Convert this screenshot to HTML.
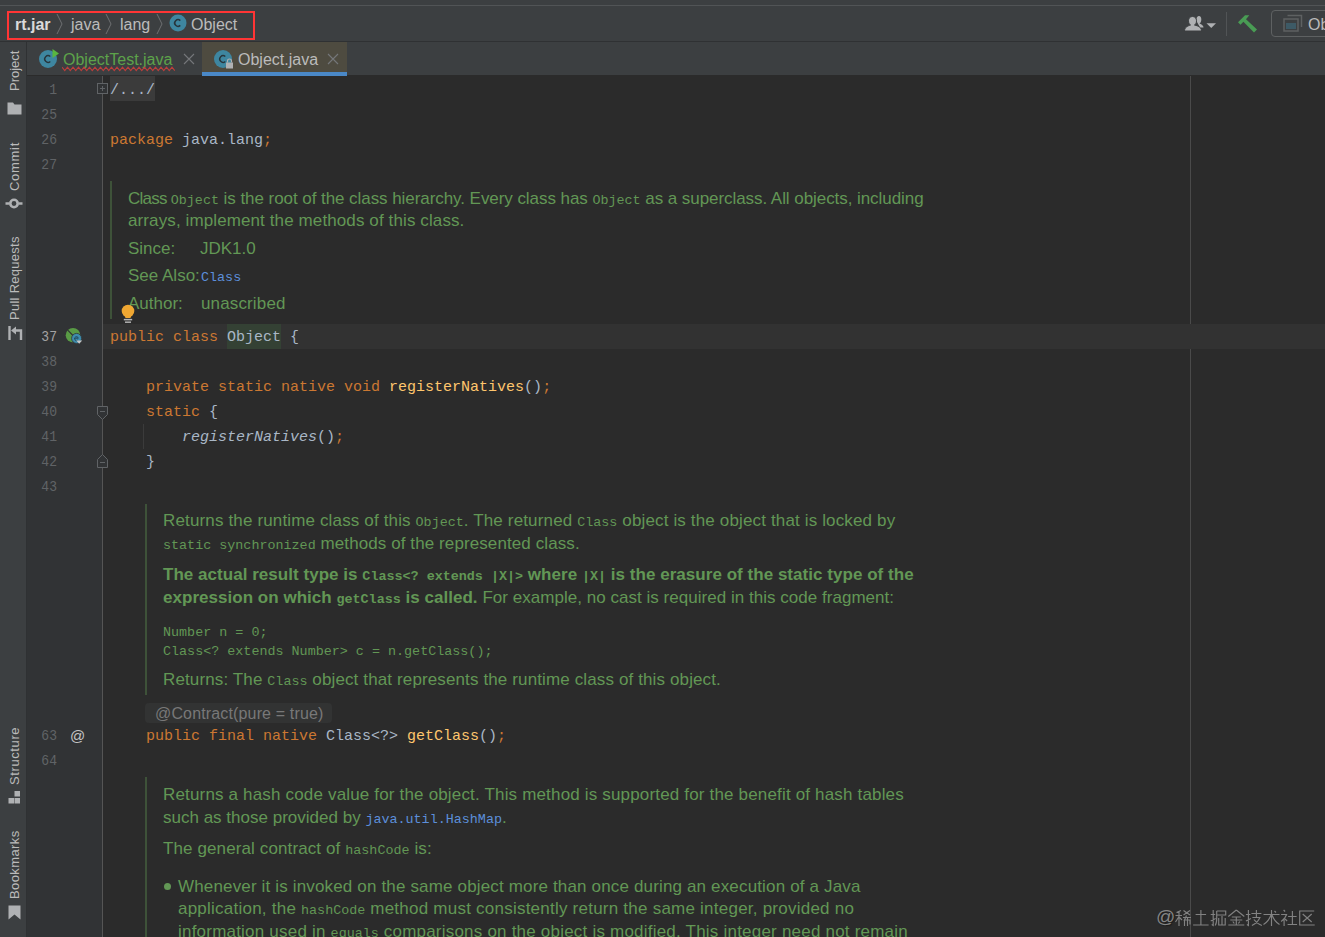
<!DOCTYPE html>
<html><head><meta charset="utf-8">
<style>
*{margin:0;padding:0;box-sizing:border-box}
html,body{width:1325px;height:937px;overflow:hidden;background:#2B2B2B}
body{position:relative;font-family:"Liberation Sans",sans-serif}
.a{position:absolute}
#top{left:0;top:0;width:1325px;height:42px;background:#3C3F41}
#top .ln5{left:0;top:5px;width:1325px;height:1px;background:#515456}
#top .bot{left:0;top:41px;width:1325px;height:1px;background:#2F3133}
#redbox{left:7px;top:11px;width:248px;height:29px;border:2px solid #FF3535}
.crumb{font-size:16px;color:#BBBBBB;white-space:pre;line-height:20px}
#side{left:0;top:42px;width:26px;height:895px;background:#3C3F41}
#sideb{left:26px;top:42px;width:1px;height:895px;background:#2F3133}
.vt{font-size:13px;color:#BBBBBB;white-space:pre;transform-origin:0 0;transform:rotate(-90deg);line-height:14px}
#tabs{left:27px;top:42px;width:1298px;height:33px;background:#3C3F41}
#seltab{left:202px;top:42px;width:145px;height:30px;background:#4E4B40}
#selline{left:202px;top:72px;width:145px;height:4px;background:#4A88C7}
.tabt{font-size:16px;white-space:pre;line-height:20px}
#gutter{left:27px;top:76px;width:75px;height:861px;background:#313335}
#gline{left:102px;top:76px;width:1px;height:861px;background:#555555}
#margin{left:1190px;top:76px;width:1px;height:861px;background:#4A4A4A}
.row{position:absolute;left:103px;width:1222px;height:25px}
.num{position:absolute;left:26px;width:31px;transform:scaleX(.9);transform-origin:100% 50%;text-align:right;font-family:"Liberation Mono",monospace;font-size:14.5px;color:#606366;line-height:25px;padding-top:1px}
.code{position:absolute;left:110px;font-family:"Liberation Mono",monospace;font-size:15px;color:#A9B7C6;white-space:pre;line-height:25px;padding-top:2px}
.k{color:#CC7832}.m{color:#FFC66D}.i{font-style:italic}
.doc{position:absolute;font-size:17px;color:#629755;white-space:pre;line-height:20px}
.doc code{font-family:"Liberation Mono",monospace;font-size:13.4px;letter-spacing:0}
.doc b{font-weight:bold}
.lnk{color:#5C8FDA}
.bar{position:absolute;width:2px;background:#3E5239}
</style></head><body>

<!-- top toolbar -->
<div id="top" class="a">
  <div class="a ln5"></div>
  <div class="a bot"></div>
</div>
<div id="redbox" class="a"></div>
<div class="a crumb" style="left:15px;top:15px;color:#DADADA;font-weight:bold">rt.jar</div>
<svg class="a" style="left:55px;top:13px" width="10" height="22"><path d="M2 1 L7 11 L2 21" stroke="#6E7072" stroke-width="1" fill="none"/></svg>
<div class="a crumb" style="left:71px;top:15px">java</div>
<svg class="a" style="left:104px;top:13px" width="10" height="22"><path d="M2 1 L7 11 L2 21" stroke="#6E7072" stroke-width="1" fill="none"/></svg>
<div class="a crumb" style="left:120px;top:15px">lang</div>
<svg class="a" style="left:155px;top:13px" width="10" height="22"><path d="M2 1 L7 11 L2 21" stroke="#6E7072" stroke-width="1" fill="none"/></svg>
<svg class="a" style="left:169px;top:14px" width="18" height="18"><circle cx="9" cy="9" r="8.5" fill="#3E86A0"/><path d="M11.3 6.6 A3.3 3.3 0 1 0 11.3 11.4" stroke="#27353C" stroke-width="1.6" fill="none"/></svg>
<div class="a crumb" style="left:191px;top:15px">Object</div>

<!-- toolbar right -->

<svg class="a" style="left:1183px;top:14px" width="36" height="20">
  <path d="M13.2 6.5 C13.2 3.5 14.5 2 16 2 C17.5 2 18.3 3.5 18.3 5.5 C18.3 7.5 17.5 9 16.5 9.5 C18.8 10.5 20.5 11.5 20.5 13.5 L17 13.5 Z" fill="#AFB1B3"/>
  <path d="M9.5 2.5 C12 2.5 13.5 4.2 13.5 6.8 C13.5 9 12.5 10.5 11.5 11 C15.5 12 18.5 13.5 18.5 17 L1.5 17 C1.5 13.5 4.5 12 7.5 11 C6.5 10.5 5.5 9 5.5 6.8 C5.5 4.2 7 2.5 9.5 2.5 Z" fill="#AFB1B3" stroke="#3C3F41" stroke-width="1"/>
  <path d="M23.5 9.2 H33 L28.25 14 Z" fill="#AFB1B3"/>
</svg>
<svg class="a" style="left:1232px;top:10px" width="30" height="28"><path d="M6 12.3 L13 5.2 L17.3 5.3 L14 9.2 L25 19.6 L22 22.4 L11.4 11.8 L8.5 14.8 Z" fill="#499C54"/></svg>
<svg class="a" style="left:1282px;top:14px" width="22" height="19"><path d="M5.5 1.5 H19.5 V13" stroke="#5E6162" stroke-width="1.5" fill="none"/><rect x="2" y="5" width="14" height="12" fill="#3C3F41" stroke="#5E6162" stroke-width="1.5"/><rect x="4" y="9" width="10" height="6" fill="#3D5A66"/></svg>

<div class="a" style="left:1226px;top:12px;width:1px;height:24px;background:#515456"></div>
<div class="a" style="left:1271px;top:10px;width:60px;height:27px;border:1px solid #5E6162;border-radius:4px"></div>
<div class="a crumb" style="left:1308px;top:15px">Ob</div>

<!-- left side strip -->
<div id="side" class="a"></div>
<div id="sideb" class="a"></div>
<div class="a vt" style="left:8px;top:91px">Project</div>
<svg class="a" style="left:7px;top:101px" width="15" height="14"><path d="M0.5 1.5 H6 L7.5 3.5 H14.5 V13.5 H0.5 Z" fill="#AFB1B3"/></svg>
<div class="a vt" style="left:8px;top:191px;letter-spacing:0.7px">Commit</div>
<svg class="a" style="left:5px;top:197px" width="18" height="13"><circle cx="9" cy="6.5" r="3.7" stroke="#AFB1B3" stroke-width="2.6" fill="none"/><path d="M0.5 6.5 H4.5 M13.5 6.5 H17.5" stroke="#AFB1B3" stroke-width="2.4"/></svg>
<div class="a vt" style="left:8px;top:320px;letter-spacing:0.27px">Pull Requests</div>
<svg class="a" style="left:8px;top:325px" width="15" height="16"><path d="M1.5 1 V15" stroke="#AFB1B3" stroke-width="2.4"/><path d="M3 5.5 L8 1.5 V9.5 Z" fill="#AFB1B3"/><path d="M7 5.5 H13 V15" stroke="#AFB1B3" stroke-width="2.4" fill="none"/></svg>
<div class="a vt" style="left:8px;top:785px;letter-spacing:0.6px">Structure</div>
<svg class="a" style="left:8px;top:790px" width="14" height="15"><rect x="6.5" y="1" width="5.5" height="5.5" fill="#AFB1B3"/><rect x="0.5" y="8" width="5.5" height="5.5" fill="#AFB1B3"/><rect x="6.5" y="8" width="5.5" height="5.5" fill="#AFB1B3"/></svg>
<div class="a vt" style="left:8px;top:899px;letter-spacing:0.4px">Bookmarks</div>
<svg class="a" style="left:8px;top:905px" width="14" height="16"><path d="M0.5 0.5 H12.5 V14.5 L6.5 9.5 L0.5 14.5 Z" fill="#AFB1B3"/></svg>


<!-- tabs -->
<div id="tabs" class="a"></div>
<div id="seltab" class="a"></div>
<div id="selline" class="a"></div>
<div class="a tabt" style="left:63px;top:50px;color:#5DA34A">ObjectTest.java</div>
<div class="a tabt" style="left:238px;top:50px;color:#BBBBBB">Object.java</div>
<svg class="a" style="left:38px;top:48px" width="22" height="22"><circle cx="10" cy="11" r="9" fill="#3E86A0"/><path d="M12.3 8.6 A3.3 3.3 0 1 0 12.3 13.4" stroke="#27353C" stroke-width="1.4" fill="none"/><path d="M14.5 1 L21 5.5 L14.5 10 Z" fill="#59B63F"/></svg>
<svg class="a" style="left:62px;top:66px" width="116" height="6"><path d="M0.00 1.2 L2.75 4.6 L5.50 1.2 L8.25 4.6 L11.00 1.2 L13.75 4.6 L16.50 1.2 L19.25 4.6 L22.00 1.2 L24.75 4.6 L27.50 1.2 L30.25 4.6 L33.00 1.2 L35.75 4.6 L38.50 1.2 L41.25 4.6 L44.00 1.2 L46.75 4.6 L49.50 1.2 L52.25 4.6 L55.00 1.2 L57.75 4.6 L60.50 1.2 L63.25 4.6 L66.00 1.2 L68.75 4.6 L71.50 1.2 L74.25 4.6 L77.00 1.2 L79.75 4.6 L82.50 1.2 L85.25 4.6 L88.00 1.2 L90.75 4.6 L93.50 1.2 L96.25 4.6 L99.00 1.2 L101.75 4.6 L104.50 1.2 L107.25 4.6 L110.00 1.2 L112.75 4.6" stroke="#BC3F3C" stroke-width="1.1" fill="none"/></svg>
<svg class="a" style="left:183px;top:53px" width="12" height="12"><path d="M1 1 L11 11 M11 1 L1 11" stroke="#75777A" stroke-width="1.1"/></svg>
<svg class="a" style="left:213px;top:49px" width="22" height="22"><circle cx="10" cy="10" r="9" fill="#3E86A0"/><path d="M12.3 7.6 A3.3 3.3 0 1 0 12.3 12.4" stroke="#27353C" stroke-width="1.4" fill="none"/><rect x="13" y="13.5" width="7" height="6" fill="#AFB1B3"/><path d="M14.5 13.5 V12 A2 2 0 0 1 18.5 12 V13.5" stroke="#AFB1B3" stroke-width="1.2" fill="none"/></svg>
<svg class="a" style="left:327px;top:53px" width="12" height="12"><path d="M1 1 L11 11 M11 1 L1 11" stroke="#75777A" stroke-width="1.1"/></svg>


<!-- gutter -->
<div id="gutter" class="a"></div>
<div id="gline" class="a"></div>
<div id="margin" class="a"></div>

<!-- current line -->
<div class="row" style="top:324px;background:#323232"></div>
<div class="a" style="left:227px;top:324px;width:54px;height:25px;background:#344134"></div>
<div class="a" style="left:110px;top:76px;width:45px;height:25px;background:#3B3B3B"></div>

<div class="num" style="padding-top:2px;top:76px">1</div>
<div class="num" style="padding-top:2px;top:101px">25</div>
<div class="num" style="padding-top:2px;top:126px">26</div>
<div class="num" style="padding-top:2px;top:151px">27</div>
<div class="num" style="top:324px;color:#A4A3A3">37</div>
<div class="num" style="top:349px">38</div>
<div class="num" style="top:374px">39</div>
<div class="num" style="top:399px">40</div>
<div class="num" style="top:424px">41</div>
<div class="num" style="top:449px">42</div>
<div class="num" style="top:474px">43</div>
<div class="num" style="padding-top:1px;top:723px">63</div>
<div class="num" style="padding-top:1px;top:748px">64</div>

<div class="code" style="top:76px">/.../</div>
<svg class="a" style="left:96px;top:82px" width="13" height="13"><rect x="1.5" y="1.5" width="10" height="10" fill="#313335" stroke="#606366"/><path d="M4 6.5 H9 M6.5 4 V9" stroke="#606366"/></svg>
<svg class="a" style="left:96px;top:405px" width="13" height="16"><path d="M1.5 1.5 H11.5 V9.5 L6.5 14.5 L1.5 9.5 Z" fill="#313335" stroke="#606366"/><path d="M4 6.5 H9" stroke="#606366"/></svg>
<svg class="a" style="left:96px;top:453px" width="13" height="16"><path d="M1.5 14.5 H11.5 V6.5 L6.5 1.5 L1.5 6.5 Z" fill="#313335" stroke="#606366"/><path d="M4 9.5 H9" stroke="#606366"/></svg>
<div class="a" style="left:143px;top:424px;width:1px;height:25px;background:#3B3B3B"></div>
<svg class="a" style="left:65px;top:327px" width="20" height="20"><circle cx="8" cy="8.2" r="7.3" fill="#599B45"/><path d="M2.5 2.8 L8 8.5 L8.3 16" stroke="#313335" stroke-width="1.2" fill="none"/><circle cx="11.6" cy="11.4" r="5" fill="#3D8DAE" stroke="#313335" stroke-width="0.8"/><path d="M9.6 11.2 H13.3 A1.9 1.9 0 1 0 12.8 13" stroke="#24485A" stroke-width="1" fill="none"/><path d="M11.2 13.4 L17.2 13.4 L14.2 16.8 Z" fill="#C6C6C6"/></svg>
<div class="a" style="left:70px;top:726px;font-size:15px;color:#C4C4C4;line-height:20px">@</div>


<div class="code" style="top:126px"><span class="k">package</span> java.lang<span class="k">;</span></div>
<div class="code" style="top:324px;padding-top:1px"><span class="k">public class</span> Object {</div>
<div class="code" style="top:374px;padding-top:1px">    <span class="k">private static native void</span> <span class="m">registerNatives</span>()<span class="k">;</span></div>
<div class="code" style="top:399px;padding-top:1px">    <span class="k">static</span> {</div>
<div class="code" style="top:424px;padding-top:1px">        <span class="i">registerNatives</span>()<span class="k">;</span></div>
<div class="code" style="top:449px;padding-top:1px">    }</div>
<div class="code" style="top:723px;padding-top:1px">    <span class="k">public final native</span> Class&lt;?&gt; <span class="m">getClass</span>()<span class="k">;</span></div>

<!-- doc 1 -->
<div class="bar" style="left:110px;top:181px;height:138px"></div>
<div class="doc" style="left:128px;top:189px;letter-spacing:-0.061px"><span style="letter-spacing:-0.75px">Class </span><code>Object</code> is the root of the class hierarchy. Every class has <code>Object</code> as a superclass. All objects, including</div>
<div class="doc" style="left:128px;top:211px;letter-spacing:0.109px">arrays, implement the methods of this class.</div>
<div class="doc" style="left:128px;top:239px">Since:</div>
<div class="doc" style="left:200px;top:239px">JDK1.0</div>
<div class="doc" style="left:128px;top:266px">See Also:</div><div class="doc" style="left:201px;top:266px"><code class="lnk">Class</code></div>
<div class="doc" style="left:128px;top:294px">Author:</div>
<svg class="a" style="left:120px;top:304px" width="16" height="21"><circle cx="8" cy="7" r="6.3" fill="#F0A732"/><path d="M4.2 10.5 L5.5 14 H10.5 L11.8 10.5 Z" fill="#F0A732"/><path d="M3.8 15.6 H12.2" stroke="#B4B4B4" stroke-width="1.5"/><path d="M5 18.2 H11" stroke="#A8A8A8" stroke-width="1.6"/></svg><div class="doc" style="left:201px;top:294px;letter-spacing:0.14px">unascribed</div>

<!-- doc 2 -->
<div class="bar" style="left:145px;top:504px;height:191px"></div>
<div class="doc" style="left:163px;top:511px;letter-spacing:0.148px">Returns the runtime class of this <code>Object</code>. The returned <code>Class</code> object is the object that is locked by</div>
<div class="doc" style="left:163px;top:534px;letter-spacing:0.094px"><code>static synchronized</code> methods of the represented class.</div>
<div class="doc" style="left:163px;top:565px;letter-spacing:0.037px"><b>The actual result type is <code>Class&lt;? extends |X|&gt;</code> where <code>|X|</code> is the erasure of the static type of the</b></div>
<div class="doc" style="left:163px;top:588px;letter-spacing:0.029px"><b>expression on which <code>getClass</code> is called.</b> For example, no cast is required in this code fragment:</div>
<div class="doc" style="left:163px;top:621px"><code>Number n = 0;</code></div>
<div class="doc" style="left:163px;top:640px"><code>Class&lt;? extends Number&gt; c = n.getClass();</code></div>
<div class="doc" style="left:163px;top:670px;letter-spacing:0.125px">Returns: The <code>Class</code> object that represents the runtime class of this object.</div>

<!-- contract inlay -->
<div class="a" style="left:145px;top:703px;width:187px;height:20px;background:#323333;border-radius:4px"></div>
<div class="a" style="left:155px;top:704px;font-size:16px;letter-spacing:0.15px;color:#787878;white-space:pre;line-height:20px">@Contract(pure = true)</div>

<!-- doc 3 -->
<div class="bar" style="left:145px;top:777px;height:160px"></div>
<div class="doc" style="left:163px;top:785px;letter-spacing:0.169px">Returns a hash code value for the object. This method is supported for the benefit of hash tables</div>
<div class="doc" style="left:163px;top:808px;letter-spacing:0.005px">such as those provided by <code class="lnk">java.util.HashMap</code>.</div>
<div class="doc" style="left:163px;top:839px;letter-spacing:0.113px">The general contract of <code>hashCode</code> is:</div>
<div class="a" style="left:164px;top:883px;width:7px;height:7px;border-radius:50%;background:#629755"></div>
<div class="doc" style="left:178px;top:877px;letter-spacing:0.157px">Whenever it is invoked on the same object more than once during an execution of a Java</div>
<div class="doc" style="left:178px;top:899px;letter-spacing:0.232px">application, the <code>hashCode</code> method must consistently return the same integer, provided no</div>
<div class="doc" style="left:178px;top:922px;letter-spacing:0.212px">information used in <code>equals</code> comparisons on the object is modified. This integer need not remain</div>


<div class="a" style="left:1156px;top:905px;font-size:19px;line-height:24px;color:#858585;text-shadow:1px 1px 1px #1a1a1a">@</div>
<svg class="a" style="left:1175px;top:908px" width="145" height="22" fill="none" stroke="#828282" stroke-width="1.15" style="filter:drop-shadow(1px 1px 0 #1c1c1c)">
 <g transform="translate(0,1)"><path d="M1.5 3.5 L6 1.5 M0.5 6.5 H7 M4 2.5 V17 M4 7.5 L0.5 13 M4.5 8.5 L7 11 M8.5 1.5 L15 6 M15 1.5 L8.5 6 M8 8.5 H16 M11.5 6.5 L9 12 M9.5 11 V17 M9.5 11 H15 V15.5 M12.5 9 V17"/></g>
 <g transform="translate(17.6,1)"><path d="M3 5.5 H13.5 M8.3 1 V16 M0.5 16 H16"/></g>
 <g transform="translate(35.2,1)"><path d="M0.5 5.5 H5 M3 1 V16.5 L1.5 15.5 M0.5 12 L5.5 9.5 M6.5 2 H15.5 V6 H6.5 M6.5 2 V9 C6.5 13 6 15 5 16.5 M8.5 9 V16 H15 V9 M11.8 7 V16"/></g>
 <g transform="translate(52.8,1)"><path d="M8.5 1 L0.5 7.5 M8.5 1 L16.5 7.5 M4 8 H13 M2.5 11 H14.5 M8.5 8 V16 M5 12.5 L6.5 14.5 M12 12.5 L10.5 14.5 M0.5 16 H16.5"/></g>
 <g transform="translate(70.4,1)"><path d="M0.5 5.5 H5 M3 1 V16.5 L1.5 15.5 M0.5 12 L5.5 9.5 M6 4.5 H16 M11 1 V8 M7 8.5 H14.5 C13 12 10 15 6.5 16.5 M8.5 10.5 C10.5 13 13 15.5 16.5 16.5"/></g>
 <g transform="translate(88,1)"><path d="M0.5 5.5 H16.5 M8.5 1 V17 M8 6 C6.5 10 4 13.5 0.5 15.5 M9 6 C10.5 10 13 13.5 16.5 15.5 M11.5 2 L13 3.5"/></g>
 <g transform="translate(105.6,1)"><path d="M3 1 L4.5 2.5 M0.5 5.5 H6 C5 8.5 3 11 0.5 12.5 M3.5 9 V17 M4.5 10 L6.5 12 M7.5 7.5 H16 M11.8 2 V15.5 M7 15.5 H16.5"/></g>
 <g transform="translate(123.2,1)"><path d="M16 2 H1.5 V16 H16.5 M4.5 5 L13.5 13 M13.5 5 L4.5 13"/></g>
</svg>
</body></html>
